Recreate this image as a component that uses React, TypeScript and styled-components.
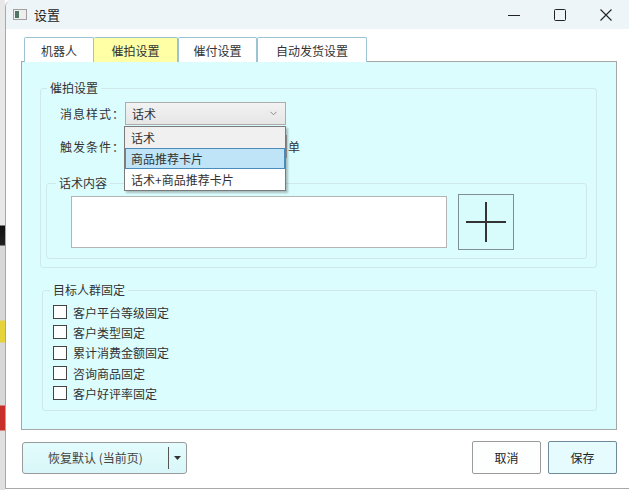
import React from "react";
import styled, { createGlobalStyle } from "styled-components";

const GlobalStyle = createGlobalStyle`
  body {
    margin: 0;
    font-family: "Noto Sans CJK SC", "Noto Sans", sans-serif;
    font-size: 12px;
    color: #333;
    background: #fff;
  }
`;

const Desktop = styled.div`
  display: flex;
  width: 629px;
  height: 490px;
  overflow: hidden;
`;

const BackStrip = styled.div`
  width: 5px;
  flex-shrink: 0;
  background: linear-gradient(
    to bottom,
    #e8e8e8 0px,
    #e8e8e8 225px,
    #111 226px,
    #222 245px,
    #d8d8d8 246px,
    #d8d8d8 320px,
    #e6d23a 321px,
    #e6d23a 342px,
    #d8d8d8 343px,
    #d8d8d8 405px,
    #c8302a 406px,
    #c8302a 430px,
    #e0e0e0 431px
  );
`;

const Window = styled.div`
  flex: 1;
  height: 488px;
  display: flex;
  flex-direction: column;
  background: #fff;
  border-left: 1px solid #a8a8a8;
  border-bottom: 1px solid #a8a8a8;
  border-top-left-radius: 7px;
  overflow: hidden;
`;

const TitleBar = styled.div`
  height: 29px;
  display: flex;
  align-items: center;
  background: #eef5f9;
  flex-shrink: 0;
`;

const TitleText = styled.span`
  font-size: 13px;
  color: #222;
  margin-left: 7px;
  flex: 1;
`;

const CaptionButton = styled.div`
  width: 46px;
  height: 29px;
  display: flex;
  align-items: center;
  justify-content: center;
`;

const Body = styled.div`
  flex: 1;
  display: flex;
  flex-direction: column;
  padding: 8px 12px 0 15px;
`;

const TabStrip = styled.div`
  display: flex;
  padding-left: 3px;
  height: 24px;
  position: relative;
  z-index: 1;
`;

const Tab = styled.div<{ $active?: boolean; $w: number }>`
  width: ${(p) => p.$w}px;
  height: 25px;
  box-sizing: border-box;
  display: flex;
  align-items: center;
  justify-content: center;
  background: ${(p) => (p.$active ? "#ffffa6" : "#fff")};
  border: 1px solid #9cc3d2;
  border-bottom: none;
  border-left: ${(p) => (p.$active ? "none" : "1px solid #9cc3d2")};
  border-radius: 2px 2px 0 0;
  color: #333;
`;

const Panel = styled.div`
  height: 369px;
  box-sizing: border-box;
  background: #dcfdfd;
  border: 1px solid #a6a6a6;
  display: flex;
  flex-direction: column;
`;

const Group = styled.fieldset<{ $mt: number; $ml: number; $mr: number; $pb: number }>`
  margin: ${(p) => p.$mt}px ${(p) => p.$mr}px 0 ${(p) => p.$ml}px;
  padding: 0 0 ${(p) => p.$pb}px 0;
  border: 1px solid #cfe9ea;
  border-radius: 3px;
  min-width: 0;
`;

const Legend = styled.legend<{ $ml: number }>`
  padding: 0 3px;
  margin-left: ${(p) => p.$ml}px;
  line-height: 16px;
  font-size: 12px;
  color: #333;
`;

const Row = styled.div<{ $mt: number }>`
  display: flex;
  align-items: center;
  height: 23px;
  margin: ${(p) => p.$mt}px 0 0 19px;
`;

const FieldLabel = styled.span`
  width: 65px;
  letter-spacing: 1px;
`;

const ComboWrap = styled.div`
  position: relative;
  width: 161px;
  height: 23px;
`;

const Combo = styled.div`
  height: 23px;
  box-sizing: border-box;
  border: 1px solid #acacac;
  background: linear-gradient(#f2f2f2, #e6e6e6);
  display: flex;
  align-items: center;
  padding: 0 8px 0 6px;
  justify-content: space-between;
`;

const DropList = styled.div`
  position: absolute;
  top: 24px;
  left: -1px;
  width: 162px;
  box-sizing: border-box;
  border: 1px solid #7a7a7a;
  background: #fff;
  box-shadow: 2px 2px 2px rgba(0, 0, 0, 0.25);
  z-index: 5;
`;

const DropItem = styled.div<{ $selected?: boolean; $bg?: string }>`
  height: 21px;
  box-sizing: border-box;
  display: flex;
  align-items: center;
  padding-left: 5px;
  background: ${(p) => (p.$selected ? "#bfe4f7" : p.$bg ?? "#fff")};
  border: 1px solid ${(p) => (p.$selected ? "#4a8cba" : "transparent")};
`;

const HiddenCombo = styled.div`
  width: 162px;
  height: 23px;
  box-sizing: border-box;
  border: 1px solid #acacac;
  background: #eee;
`;

const TailText = styled.span`
  margin-left: 1px;
`;

const ContentRow = styled.div`
  display: flex;
  align-items: center;
  gap: 11px;
  margin: 3px 0 0 24px;
`;

const TextBox = styled.div`
  width: 376px;
  height: 52px;
  box-sizing: border-box;
  background: #fff;
  border: 1px solid #b4b4b4;
`;

const PlusButton = styled.div`
  width: 56px;
  height: 56px;
  box-sizing: border-box;
  border: 1px solid #7f8f94;
  background: #d8fbfb;
  display: flex;
  align-items: center;
  justify-content: center;
`;

const CheckList = styled.div`
  margin: 4px 0 0 10px;
`;

const CheckRow = styled.label`
  display: flex;
  align-items: center;
  height: 20.3px;
  gap: 6px;
`;

const CheckBox = styled.span`
  width: 14px;
  height: 14px;
  box-sizing: border-box;
  border: 1px solid #444;
  background: #fff;
`;

const BottomBar = styled.div`
  display: flex;
  align-items: center;
  justify-content: space-between;
  margin-top: 11px;
  padding-left: 1px;
`;

const SplitButton = styled.div`
  width: 165px;
  height: 32px;
  box-sizing: border-box;
  border: 1px solid #9a9a9a;
  border-radius: 3px;
  background: linear-gradient(#e4fcfd, #d8f7f8);
  display: flex;
  align-items: center;
`;

const SplitMain = styled.span`
  flex: 1;
  text-align: center;
  color: #444;
`;

const SplitArrow = styled.span`
  width: 16px;
  height: 22px;
  border-left: 1px solid #555;
  display: flex;
  align-items: center;
  justify-content: center;
  margin-right: 1px;
`;

const ButtonGroup = styled.div`
  display: flex;
  gap: 7px;
`;

const DialogButton = styled.div<{ $default?: boolean }>`
  width: 69px;
  height: 33px;
  box-sizing: border-box;
  display: flex;
  align-items: center;
  justify-content: center;
  border: 1px solid ${(p) => (p.$default ? "#6f8a9a" : "#9b9b9b")};
  background: ${(p) => (p.$default ? "#e6fbfd" : "#fdfefe")};
  border-radius: 2px;
  color: #222;
`;

const AppIcon = () => (
  <svg width="14" height="11" viewBox="0 0 14 11" style={{ marginLeft: 7 }}>
    <rect x="0.5" y="0.5" width="13" height="10" fill="#eeeeee" stroke="#a0a0a0" />
    <rect x="2" y="2" width="4" height="7" fill="#4f7466" />
  </svg>
);

const targetItems = [
  "客户平台等级固定",
  "客户类型固定",
  "累计消费金额固定",
  "咨询商品固定",
  "客户好评率固定",
];

export default function App() {
  return (
    <>
      <GlobalStyle />
      <Desktop>
        <BackStrip />
        <Window>
          <TitleBar>
            <AppIcon />
            <TitleText>设置</TitleText>
            <CaptionButton>
              <svg width="12" height="12" viewBox="0 0 12 12">
                <line x1="0" y1="6.5" x2="12" y2="6.5" stroke="#222" strokeWidth="1" />
              </svg>
            </CaptionButton>
            <CaptionButton>
              <svg width="12" height="12" viewBox="0 0 12 12">
                <rect x="0.5" y="0.5" width="11" height="11" rx="1" fill="none" stroke="#222" />
              </svg>
            </CaptionButton>
            <CaptionButton>
              <svg width="12" height="12" viewBox="0 0 12 12">
                <path d="M0.5 0.5 L11.5 11.5 M11.5 0.5 L0.5 11.5" stroke="#222" strokeWidth="1.1" />
              </svg>
            </CaptionButton>
          </TitleBar>
          <Body>
            <TabStrip>
              <Tab $w={70}>机器人</Tab>
              <Tab $w={84} $active>
                催拍设置
              </Tab>
              <Tab $w={79}>催付设置</Tab>
              <Tab $w={110}>自动发货设置</Tab>
            </TabStrip>
            <Panel>
              <Group $mt={18} $ml={18} $mr={19} $pb={8}>
                <Legend $ml={6}>催拍设置</Legend>
                <Row $mt={6}>
                  <FieldLabel>消息样式：</FieldLabel>
                  <ComboWrap>
                    <Combo>
                      <span>话术</span>
                      <svg width="7" height="5" viewBox="0 0 7 5">
                        <path d="M0.5 0.8 L3.5 3.8 L6.5 0.8" fill="none" stroke="#888" />
                      </svg>
                    </Combo>
                    <DropList>
                      <DropItem $bg="#f0f0f0">话术</DropItem>
                      <DropItem $selected>商品推荐卡片</DropItem>
                      <DropItem>话术+商品推荐卡片</DropItem>
                    </DropList>
                  </ComboWrap>
                </Row>
                <Row $mt={10}>
                  <FieldLabel>触发条件：</FieldLabel>
                  <HiddenCombo />
                  <TailText>单</TailText>
                </Row>
                <Group $mt={17} $ml={5} $mr={9} $pb={8}>
                  <Legend $ml={9}>话术内容</Legend>
                  <ContentRow>
                    <TextBox />
                    <PlusButton>
                      <svg width="40" height="40" viewBox="0 0 40 40">
                        <path d="M0 20 H40 M20 0 V40" stroke="#333" strokeWidth="2" />
                      </svg>
                    </PlusButton>
                  </ContentRow>
                </Group>
              </Group>
              <Group $mt={14} $ml={20} $mr={19} $pb={7}>
                <Legend $ml={7}>目标人群固定</Legend>
                <CheckList>
                  {targetItems.map((t) => (
                    <CheckRow key={t}>
                      <CheckBox />
                      <span>{t}</span>
                    </CheckRow>
                  ))}
                </CheckList>
              </Group>
            </Panel>
            <BottomBar>
              <SplitButton>
                <SplitMain>恢复默认 (当前页)</SplitMain>
                <SplitArrow>
                  <svg width="7" height="4" viewBox="0 0 7 4">
                    <path d="M0 0 H7 L3.5 4 Z" fill="#333" />
                  </svg>
                </SplitArrow>
              </SplitButton>
              <ButtonGroup>
                <DialogButton>取消</DialogButton>
                <DialogButton $default>保存</DialogButton>
              </ButtonGroup>
            </BottomBar>
          </Body>
        </Window>
      </Desktop>
    </>
  );
}
